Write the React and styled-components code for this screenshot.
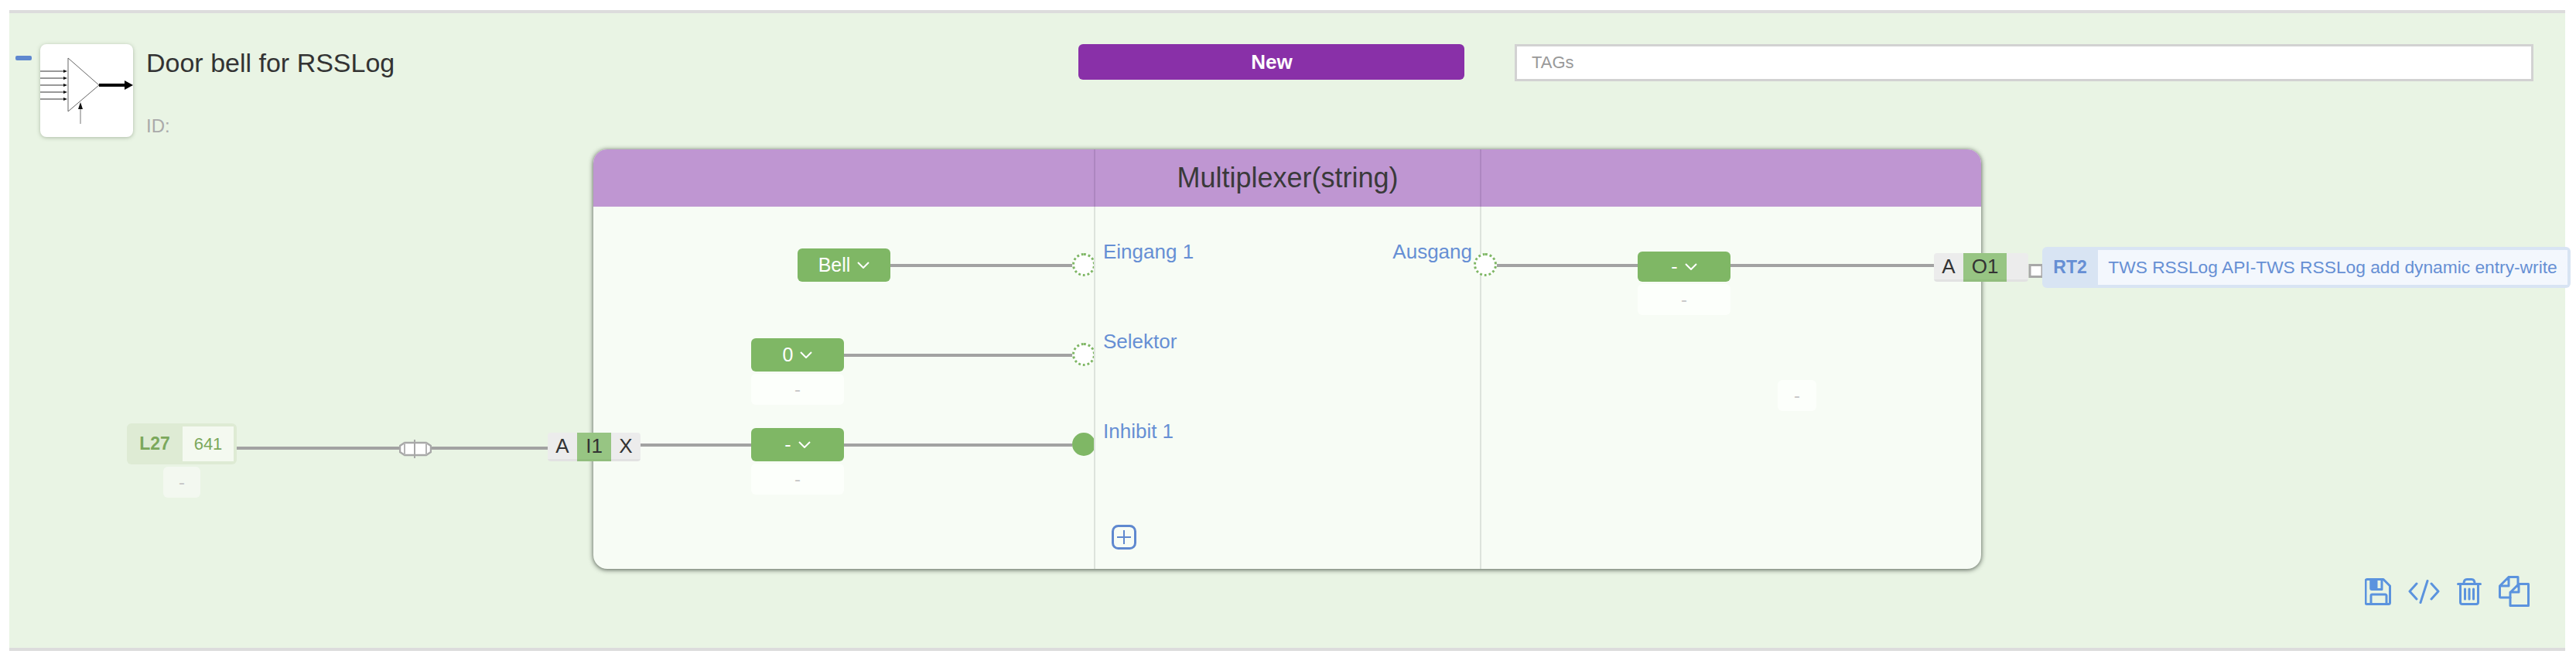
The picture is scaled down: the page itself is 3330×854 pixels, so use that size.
import React from 'react';
import styled, { createGlobalStyle } from 'styled-components';

const Global = createGlobalStyle`
  html, body {
    margin: 0;
    background: #fff;
  }
  body {
    font-family: "Liberation Sans", Arial, sans-serif;
  }
  * {
    box-sizing: border-box;
  }
`;

const Panel = styled.div`
  width: 3304px;
  height: 828px;
  margin: 13px 0 0 12px;
  padding-top: 40px;
  background: #e9f4e4;
  border-top: 4px solid #dcdcdc;
  border-bottom: 4px solid #dcdcdc;
`;

const Header = styled.div`
  display: flex;
  align-items: flex-start;
  height: 136px;
`;

const Collapse = styled.div`
  flex: none;
  width: 21px;
  height: 6px;
  margin: 15px 11px 0 8px;
  border-radius: 2px;
  background: #5f88cf;
`;

const Thumb = styled.div`
  flex: none;
  width: 120px;
  height: 120px;
  border-radius: 8px;
  background: #fff;
  box-shadow: 0 1px 5px rgba(60, 80, 50, 0.35);
  overflow: hidden;
`;

const TitleBox = styled.div`
  flex: none;
  width: 1205px;
  margin-left: 17px;
  padding-top: 6px;
`;

const Title = styled.div`
  font-size: 34px;
  line-height: 36px;
  color: #333;
`;

const IdLine = styled.div`
  margin-top: 50px;
  font-size: 24px;
  line-height: 28px;
  color: #aaa;
`;

const NewButton = styled.div`
  flex: none;
  display: flex;
  align-items: center;
  justify-content: center;
  width: 499px;
  height: 46px;
  padding-left: 1px;
  border-radius: 6px;
  background: #8930a8;
  color: #fff;
  font-size: 26px;
  font-weight: 700;
`;

const TagsField = styled.div`
  flex: none;
  display: flex;
  align-items: center;
  width: 1317px;
  height: 48px;
  margin-left: 65px;
  padding-left: 19px;
  border: 3px solid #d2d2d2;
  background: #fff;
  color: #999;
  font-size: 22px;
`;

const Block = styled.div`
  width: 1794px;
  height: 542px;
  margin-left: 755px;
  border-radius: 18px;
  background: #f7fcf5;
  box-shadow: 0 1px 6px rgba(20, 30, 20, 0.75);
`;

const columns = '647px 499px 648px';

const BlockHead = styled.div`
  display: grid;
  grid-template-columns: ${columns};
  height: 74px;
  border-radius: 18px 18px 0 0;
  background: #bf96d2;
`;

const HeadCell = styled.div`
  display: flex;
  align-items: center;
  justify-content: center;
  border-left: ${({ $line }) => ($line ? '2px solid #ad86c0' : 'none')};
  color: #3a3a3a;
  font-size: 36px;
`;

const BlockBody = styled.div`
  display: grid;
  grid-template-columns: ${columns};
  height: 468px;
`;

const InputColumn = styled.div`
  padding-top: 54px;
`;

const MiddleColumn = styled.div`
  padding: 43px 10px 0;
  border-left: 2px solid #dde3dc;
`;

const OutputColumn = styled.div`
  padding-top: 54px;
  border-left: 2px solid #dde3dc;
`;

const PinRow = styled.div`
  display: flex;
  align-items: flex-start;
  justify-content: flex-end;
  height: 116px;
  margin-right: -2px;
  & > * {
    flex: none;
  }
`;

const OutRow = styled.div`
  display: flex;
  align-items: flex-start;
  height: 86px;
  margin-left: -10px;
  & > * {
    flex: none;
  }
`;

const Wire = styled.div`
  width: ${({ $w }) => $w}px;
  height: 4px;
  margin-top: ${({ $top = 20 }) => $top}px;
  background: #a2a2a2;
`;

const Pin = styled.div`
  width: 30px;
  height: 30px;
  margin-top: 6px;
  border-radius: 50%;
  border: ${({ $on }) => ($on ? 'none' : '3px dotted #7fb765')};
  background: ${({ $on }) => ($on ? '#7fb765' : '#fff')};
`;

const LabelRow = styled.div`
  display: flex;
  justify-content: space-between;
  height: 116px;
  font-size: 26px;
  line-height: 30px;
  color: #668fd4;
`;

const AddButton = styled.svg`
  display: block;
  width: 32px;
  height: 32px;
  margin: 20px 0 0 11px;
`;

const SelectStack = styled.div`
  display: flex;
  flex-direction: column;
  gap: 3px;
  width: 120px;
  margin-top: ${({ $top = 0 }) => $top}px;
`;

const Select = styled.div`
  display: flex;
  align-items: center;
  justify-content: center;
  gap: 9px;
  height: ${({ $h = 43 }) => $h}px;
  border-radius: 6px;
  background: #7fb765;
  color: #fff;
  font-size: 25px;
`;

const Note = styled.div`
  display: flex;
  align-items: center;
  justify-content: center;
  width: ${({ $w = 120 }) => $w}px;
  height: 40px;
  border-radius: 6px;
  background: ${({ $bg = '#fcfffb' }) => $bg};
  color: #c8c8c8;
  font-size: 24px;
`;

const FreeNote = styled(Note)`
  margin: 84px 0 0 383px;
`;

const Socket = styled.div`
  display: flex;
  height: 37px;
  margin-top: 6px;
  border-radius: 4px;
  overflow: hidden;
`;

const SocketCell = styled.div`
  display: flex;
  align-items: center;
  justify-content: center;
  width: ${({ $w }) => $w}px;
  padding-bottom: 2px;
  background: ${({ $on }) => ($on ? '#97c583' : '#ececec')};
  box-shadow: inset 0 -3px 0 rgba(0, 0, 0, 0.04);
  color: #333;
  font-size: 26px;
`;

const TagColumn = styled.div`
  display: flex;
  flex-direction: column;
  align-items: center;
  gap: 3px;
  margin-top: -6px;
`;

const Tag = styled.div`
  display: flex;
  height: 53px;
  margin-top: ${({ $top = 0 }) => $top}px;
  padding: 4px 4px 4px 0;
  border-radius: 6px;
  background: ${({ $bg }) => $bg};
  color: ${({ $fg }) => $fg};
  font-size: ${({ $size = 22 }) => $size}px;
`;

const TagKey = styled.div`
  display: flex;
  align-items: center;
  justify-content: center;
  width: 72px;
  font-size: 23px;
  font-weight: 700;
`;

const TagValue = styled.div`
  display: flex;
  align-items: center;
  justify-content: center;
  width: ${({ $w }) => $w}px;
  background: ${({ $bg }) => $bg};
`;

const Fuse = styled.svg`
  display: block;
  width: ${({ $w }) => $w}px;
  height: ${({ $h }) => $h}px;
  margin-top: ${({ $top }) => $top}px;
`;

const Actions = styled.div`
  display: flex;
  align-items: center;
  justify-content: flex-end;
  gap: 22px;
  height: 40px;
  margin-top: 9px;
  padding-right: 46px;
`;

const ActionIcon = styled.svg`
  display: block;
  width: ${({ $w }) => $w}px;
  height: ${({ $h }) => $h}px;
  fill: none;
  stroke: #5b93de;
  stroke-width: 3;
  stroke-linejoin: round;
  stroke-linecap: round;
`;

const Chevron = () => (
  <svg width="16" height="9" viewBox="0 0 16 9" fill="none" stroke="#fff" strokeWidth="2">
    <path d="M1 1l7 7 7-7" />
  </svg>
);

const MuxDrawing = () => (
  <svg width="120" height="120" viewBox="0 0 120 120" fill="none">
    <path d="M36 18v69l40-34z" stroke="#666" strokeWidth="1" />
    {[35, 44, 53, 62, 71].map(y => (
      <g key={y}>
        <path d={`M0 ${y}h32`} stroke="#333" strokeWidth="1" />
        <path d={`M30 ${y - 2}l5 2-5 2z`} fill="#111" />
      </g>
    ))}
    <path d="M76 53h34" stroke="#000" strokeWidth="4" />
    <path d="M109 47l11 6-11 6z" fill="#000" />
    <path d="M52 103V82" stroke="#777" strokeWidth="1" />
    <path d="M52 75l-3 9h6z" fill="#111" />
  </svg>
);

const Option = ({ children, h }) => (
  <Select $h={h}>
    {children}
    <Chevron />
  </Select>
);

export default function App() {
  return (
    <>
      <Global />
      <Panel>
        <Header>
          <Collapse />
          <Thumb>
            <MuxDrawing />
          </Thumb>
          <TitleBox>
            <Title>Door bell for RSSLog</Title>
            <IdLine>ID:</IdLine>
          </TitleBox>
          <NewButton>New</NewButton>
          <TagsField>TAGs</TagsField>
        </Header>

        <Block>
          <BlockHead>
            <HeadCell />
            <HeadCell $line>Multiplexer(string)</HeadCell>
            <HeadCell $line />
          </BlockHead>
          <BlockBody>
            <InputColumn>
              <PinRow>
                <SelectStack>
                  <Option>Bell</Option>
                </SelectStack>
                <Wire $w={235} />
                <Pin />
              </PinRow>
              <PinRow>
                <SelectStack>
                  <Option>0</Option>
                  <Note>-</Note>
                </SelectStack>
                <Wire $w={295} />
                <Pin />
              </PinRow>
              <PinRow>
                <TagColumn>
                  <Tag $bg="#deebd4" $fg="#7ba85c">
                    <TagKey>L27</TagKey>
                    <TagValue $w={66} $bg="#f4f9f0">641</TagValue>
                  </Tag>
                  <Note $w={48} $bg="#f3f8f0">-</Note>
                </TagColumn>
                <Wire $w={210} $top={24} />
                <Fuse $w={42} $h={24} $top={15} viewBox="0 0 42 24">
                  <path d="M7 4h28l6 4v8l-6 4H7l-6-4V8z" fill="#fff" stroke="#a8a8a8" strokeWidth="2.500" strokeLinejoin="round" />
                  <path d="M7 4v16M35 4v16" stroke="#b4b4b4" strokeWidth="2" />
                  <path d="M20 0v24" stroke="#a8a8a8" strokeWidth="2" />
                </Fuse>
                <Wire $w={150} $top={24} />
                <Socket>
                  <SocketCell $w={38}>A</SocketCell>
                  <SocketCell $w={44} $on>I1</SocketCell>
                  <SocketCell $w={38}>X</SocketCell>
                </Socket>
                <Wire $w={143} />
                <SelectStack>
                  <Option>-</Option>
                  <Note>-</Note>
                </SelectStack>
                <Wire $w={295} />
                <Pin $on />
              </PinRow>
            </InputColumn>

            <MiddleColumn>
              <LabelRow>
                <span>Eingang 1</span>
                <span>Ausgang</span>
              </LabelRow>
              <LabelRow>
                <span>Selektor</span>
              </LabelRow>
              <LabelRow>
                <span>Inhibit 1</span>
              </LabelRow>
              <AddButton viewBox="0 0 32 32" fill="none" stroke="#5f88cf">
                <rect x="1.5" y="1.5" width="29" height="29" rx="7" strokeWidth="3" />
                <path d="M16 7v18M7 16h18" strokeWidth="2" />
              </AddButton>
            </MiddleColumn>

            <OutputColumn>
              <OutRow>
                <Pin />
                <Wire $w={182} />
                <SelectStack $top={4}>
                  <Option h={39}>-</Option>
                  <Note>-</Note>
                </SelectStack>
                <Wire $w={263} />
                <Socket>
                  <SocketCell $w={38}>A</SocketCell>
                  <SocketCell $w={56} $on>O1</SocketCell>
                  <SocketCell $w={28} />
                </Socket>
                <Fuse $w={18} $h={20} $top={19} viewBox="0 0 18 20">
                  <path d="M2 2.5h16v15H2z" fill="#fff" stroke="#a8a8a8" strokeWidth="3" />
                </Fuse>
                <Tag $top={-2} $size={22.75} $bg="#d8e4f3" $fg="#668fd4">
                  <TagKey>RT2</TagKey>
                  <TagValue $w={607} $bg="#f3f7fd">TWS RSSLog API-TWS RSSLog add dynamic entry-write</TagValue>
                </Tag>
              </OutRow>
              <FreeNote $w={50}>-</FreeNote>
            </OutputColumn>
          </BlockBody>
        </Block>

        <Actions>
          <ActionIcon $w={34} $h={35} viewBox="0 0 34 35">
            <path d="M3 1.500h21L32.500 10v21.500a2 2 0 0 1-2 2H3a2 2 0 0 1-2-2V3.500a2 2 0 0 1 2-2z" />
            <path d="M8 2v11a1.500 1.500 0 0 0 1.500 1.500H22V2M8 33V22.500a1.500 1.500 0 0 1 1.500-1.500h17a1.500 1.500 0 0 1 1.500 1.500V33" />
            <path d="M8 2h7v12H8z" fill="#5b93de" />
          </ActionIcon>
          <ActionIcon $w={41} $h={31} viewBox="0 0 41 31">
            <path d="M11 5L2 15l9 10M30 5l9 10-9 10M25 1.500L16 29.500" />
          </ActionIcon>
          <ActionIcon $w={32} $h={35} viewBox="0 0 32 35">
            <path d="M1.500 7.500h29M9 7c0-3 1-5.500 4-5.500h6c3 0 4 2.500 4 5.500M4.500 8v23a2.500 2.500 0 0 0 2.500 2.500h18a2.500 2.500 0 0 0 2.500-2.500V8M10.500 14v13M16 14v13M21.500 14v13" />
          </ActionIcon>
          <ActionIcon $w={40} $h={40} viewBox="0 0 40 40">
            <path d="M13 1.500h12v9M13 1.500L1.500 13v14a1 1 0 0 0 1 1H15M13 2v11H2" />
            <path d="M26 10.500h12.500v28H15V21.500zM26 11v10H15" />
          </ActionIcon>
        </Actions>
      </Panel>
    </>
  );
}
